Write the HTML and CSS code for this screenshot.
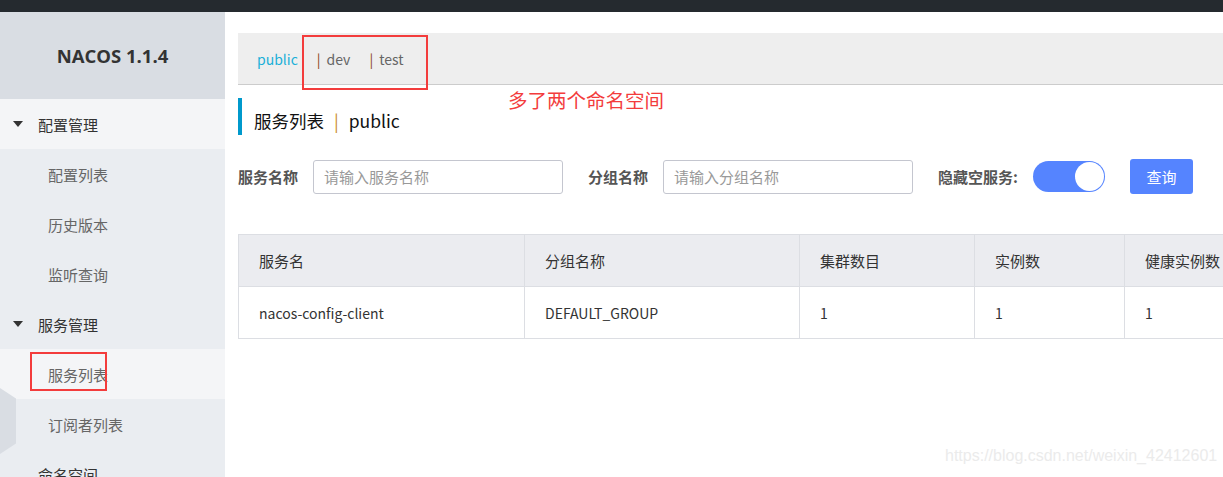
FILE: index.html
```html
<!DOCTYPE html>
<html lang="zh">
<head>
<meta charset="utf-8">
<title>Nacos</title>
<link rel="stylesheet" href="styles.css">
</head>
<body>
<div class="topbar"></div>
<div class="layout">
  <aside class="sidebar">
    <div class="brand">NACOS 1.1.4</div>
    <div class="menu-group open"><span class="caret"></span>配置管理</div>
    <div class="menu-item">配置列表</div>
    <div class="menu-item">历史版本</div>
    <div class="menu-item">监听查询</div>
    <div class="menu-group"><span class="caret"></span>服务管理</div>
    <div class="menu-item active">服务列表<span class="mark mark-side"></span></div>
    <div class="menu-item">订阅者列表</div>
    <div class="menu-group plain">命名空间</div>
    <div class="collapse-tab"></div>
  </aside>
  <main class="main">
    <div class="ns-bar">
      <span class="ns ns-current">public</span>
      <span class="ns"><span class="sep">|</span>dev</span>
      <span class="ns"><span class="sep">|</span>test</span>
      <span class="mark mark-ns"></span>
      <span class="note">多了两个命名空间</span>
    </div>
    <h1 class="title">服务列表 <span class="title-sep">|</span> public</h1>
    <div class="filters">
      <label class="flabel">服务名称</label>
      <div class="input">请输入服务名称</div>
      <label class="flabel">分组名称</label>
      <div class="input">请输入分组名称</div>
      <label class="flabel">隐藏空服务:</label>
      <div class="switch"><span class="knob"></span></div>
      <button class="btn">查询</button>
    </div>
    <div class="table-wrap">
      <table class="table">
        <thead>
          <tr><th class="c1">服务名</th><th class="c2">分组名称</th><th class="c3">集群数目</th><th class="c4">实例数</th><th class="c5">健康实例数</th></tr>
        </thead>
        <tbody>
          <tr><td>nacos-config-client</td><td>DEFAULT_GROUP</td><td>1</td><td>1</td><td>1</td></tr>
        </tbody>
      </table>
    </div>
  </main>
</div>
<div class="watermark">https://blog.csdn.net/weixin_42412601</div>
</body>
</html>
```
FILE: styles.css
```css
html, body {
  margin: 0;
  padding: 0;
  height: 477px;
  overflow: hidden;
  background: #fff;
  font-family: "Noto Sans CJK SC", "Microsoft YaHei", sans-serif;
  color: #333;
}
.topbar {
  height: 12px;
  background: #252a2f;
}
.layout {
  display: flex;
  height: 465px;
}
.sidebar {
  position: relative;
  width: 225px;
  flex: none;
  background: #eaedf1;
}
.brand {
  height: 87px;
  background: #d9dde3;
  display: flex;
  align-items: center;
  justify-content: center;
  font-family: "Open Sans", "Noto Sans", sans-serif;
  font-weight: 700;
  font-size: 18.5px;
  color: #333;
}
.menu-group, .menu-item {
  height: 50px;
  display: flex;
  align-items: center;
  font-size: 15px;
  position: relative;
}
.menu-group {
  padding-left: 13px;
  color: #333;
}
.menu-group.open { background: #f4f5f7; }
.menu-group.plain { padding-left: 38px; }
.caret {
  width: 0;
  height: 0;
  border-left: 5px solid transparent;
  border-right: 5px solid transparent;
  border-top: 6px solid #333;
  margin-right: 15px;
}
.menu-item {
  padding-left: 48px;
  color: #666;
}
.menu-item.active { background: #f4f5f7; }
.collapse-tab {
  position: absolute;
  left: 0;
  top: 376px;
  width: 16px;
  height: 66px;
  background: #d9dde3;
  clip-path: polygon(0 0, 100% 16%, 100% 84%, 0 100%);
}
.mark {
  position: absolute;
  border: 2px solid #f33c3c;
  box-sizing: border-box;
}
.mark-side {
  left: 30px;
  top: 3px;
  width: 77px;
  height: 39px;
}
.main {
  flex: 1;
  min-width: 0;
  padding: 21px 0 0 13px;
  overflow: hidden;
}
.ns-bar {
  position: relative;
  height: 51px;
  background: #eee;
  border-bottom: 1px solid #ccc;
  display: flex;
  align-items: center;
  padding-left: 19px;
  font-size: 14px;
}
.ns { color: #666; margin-right: 19px; }
.ns-current { color: #1ab0d8; margin-right: 19px; }
.sep { color: #8b4513; margin-right: 6px; }
.mark-ns {
  left: 64px;
  top: 2px;
  width: 126px;
  height: 55px;
}
.note {
  position: absolute;
  left: 270px;
  top: 52px;
  color: #f33c3c;
  font-size: 19.5px;
}
.title {
  margin: 13px 0 0 0;
  height: 37px;
  border-left: 4px solid #0099cc;
  padding-left: 12px;
  display: flex;
  align-items: center;
  font-size: 17.5px;
  font-weight: 400;
  color: #111;
  padding-top: 8px;
  box-sizing: border-box;
}
.title-sep { color: #c98a30; margin: 0 10px; }
.filters {
  margin-top: 24px;
  display: flex;
  align-items: center;
  height: 35px;
}
.flabel {
  font-size: 15px;
  font-weight: 700;
  color: #555;
  margin-right: 15px;
}
.input {
  width: 250px;
  height: 34px;
  box-sizing: border-box;
  border: 1px solid #c4c6cf;
  border-radius: 3px;
  display: flex;
  align-items: center;
  padding-left: 10px;
  color: #999;
  font-size: 15px;
  margin-right: 25px;
}
.switch {
  width: 72px;
  height: 31px;
  border-radius: 16px;
  background: #5584ff;
  position: relative;
  margin-right: 25px;
}
.knob {
  position: absolute;
  right: 1px;
  top: 1px;
  width: 29px;
  height: 29px;
  border-radius: 50%;
  background: #fff;
}
.btn {
  width: 63px;
  height: 35px;
  border: none;
  border-radius: 3px;
  background: #5584ff;
  color: #fff;
  font-family: inherit;
  font-size: 15px;
  padding: 0;
}
.table-wrap {
  margin-top: 40px;
  width: 1100px;
}
.table {
  border-collapse: collapse;
  table-layout: fixed;
  width: 1100px;
  color: #333;
}
.table th, .table td {
  box-sizing: border-box;
  border: 1px solid #dcdee3;
  height: 52px;
  padding: 0 0 0 20px;
  text-align: left;
  font-weight: 400;
}
.table th { background: #ebecf0; font-size: 15px; }
.table td { font-size: 14px; }
.c1 { width: 286px; }
.c2 { width: 275px; }
.c3 { width: 175px; }
.c4 { width: 150px; }
.c5 { width: 214px; }
.watermark {
  position: absolute;
  left: 945px;
  top: 447px;
  font-family: "Liberation Sans", Arial, sans-serif;
  font-size: 16px;
  color: #ebebeb;
}
```
